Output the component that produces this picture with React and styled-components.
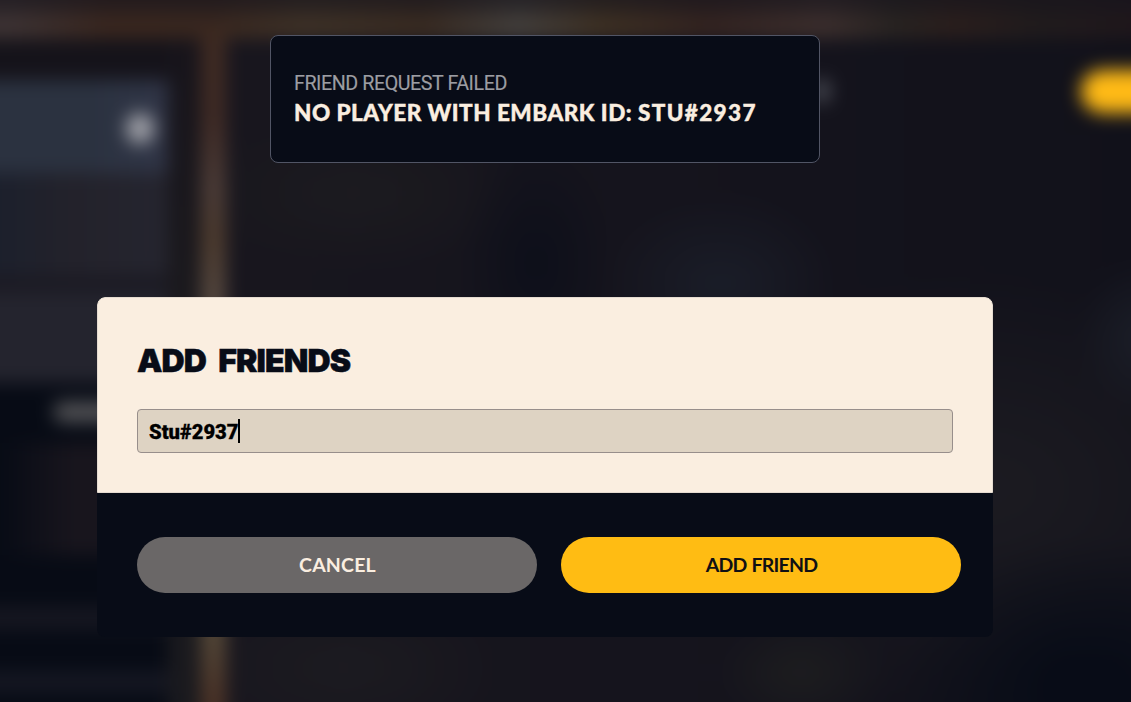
import React, { useState } from 'react';
import styled, { createGlobalStyle } from 'styled-components';

const GlobalStyle = createGlobalStyle`
  * {
    box-sizing: border-box;
  }

  body {
    margin: 0;
    overflow: hidden;
    background: #14131b;
  }
`;

const Page = styled.div`
  position: relative;
  width: 100%;
  height: 100vh;
  overflow: hidden;
`;

/* Blurred game menu, bleeds past the page so the blur has no soft edge */
const Backdrop = styled.div`
  position: absolute;
  inset: -24px;
  display: flex;
  flex-direction: column;
  filter: blur(9px);
`;

const Rail = styled.div`
  height: 62px;
  flex-shrink: 0;
  background:
    linear-gradient(180deg, rgba(22, 20, 28, 0.7) 38%, rgba(22, 20, 28, 0) 80%),
    linear-gradient(90deg, #403535 3%, #3c281f 11%, #3b281f 20%, #403327 28%, #3b2c21 38%, #46423e 46%, #403223 53%, #352420 62%, #3e302e 72%, #292421 78%, #2c1f1c 83%, #211c1c 90%, #20161b);
`;

const Scene = styled.div`
  display: flex;
  flex: 1;
`;

const Sidebar = styled.div`
  width: 192px;
  padding-top: 42px;
  background: #15131a;
`;

const ProfileRow = styled.div`
  display: flex;
  align-items: center;
  justify-content: flex-end;
  height: 93px;
  padding: 3px 14px 0 0;
  background: linear-gradient(90deg, #2b3240 60%, #303547);
`;

const Avatar = styled.div`
  width: 28px;
  height: 31px;
  border-radius: 50%;
  background: #a0a1a8;
`;

const SideRow = styled.div`
  height: ${(props) => props.$height}px;
  background: ${(props) => props.$color};
`;

const LabelRow = styled.div`
  height: 60px;
  padding: 19px 0 0 78px;
  background: #070b15;
`;

const Label = styled.div`
  width: 70px;
  height: 20px;
  border-radius: 8px;
  background: #535356;
`;

const Gap = styled.div`
  width: 33px;
  background: linear-gradient(180deg, #17141b, #1c1b1e 50%, #19191e);
`;

const Pillar = styled.div`
  width: 25px;
  background: linear-gradient(180deg, #402b22 0, #402b25 80px, #4c3c37 150px, #4d3b2e 200px, #554840 265px, #554838 595px, #4b3226 665px);
`;

const Hall = styled.div`
  display: flex;
  justify-content: space-between;
  flex: 1;
  padding-top: 32px;
  background:
    radial-gradient(ellipse 80px 130px at 310px 225px, #0d0f1a, transparent),
    radial-gradient(ellipse 120px 90px at 495px 245px, #1a1d28, transparent),
    radial-gradient(ellipse 170px 80px at 130px 155px, #1c1b1f, transparent),
    radial-gradient(ellipse 70px 80px at 920px 300px, #1b1e28, transparent),
    radial-gradient(ellipse 190px 150px at 860px 650px, #080c17 20%, transparent),
    radial-gradient(ellipse 320px 220px at 760px 450px, #1c1b21, transparent),
    radial-gradient(ellipse 90px 60px at 575px 635px, #1d1d1f, transparent),
    radial-gradient(ellipse 160px 80px at 120px 630px, #1c1b20, transparent),
    linear-gradient(90deg, #18161e, #14131c 60%, #11111a);
`;

const Glow = styled.div`
  width: 19px;
  height: 24px;
  margin: 9px 0 0 586px;
  border-radius: 50%;
  background: #484a53;
`;

const Pill = styled.div`
  width: 74px;
  height: 43px;
  border-radius: 22px 0 0 22px;
  background: #ffba16;
`;

const Overlay = styled.div`
  position: relative;
  padding-top: 35px;
`;

const Toast = styled.div`
  width: 550px;
  height: 128px;
  margin-left: 270px;
  padding: 35px 23px 0;
  border: 1px solid #515565;
  border-radius: 8px;
  background: #080c17;
  white-space: nowrap;
`;

const ToastTitle = styled.div`
  color: #9c9da2;
  font-family: Roboto, sans-serif;
  font-size: 19.7px;
  line-height: 26px;
  letter-spacing: -0.45px;
  -webkit-text-stroke: 0.15px #9c9da2;
`;

const ToastMessage = styled.div`
  margin-top: 1px;
  color: #faeee0;
  font-family: Lato, sans-serif;
  font-size: 22.5px;
  font-weight: 900;
  line-height: 30px;
  letter-spacing: 0.5px;
  -webkit-text-stroke: 0.4px #faeee0;
`;

const PlayerTag = styled.span`
  letter-spacing: 1.35px;
`;

const Dialog = styled.div`
  width: 896px;
  margin: 134px 0 0 97px;
  border-radius: 8px;
  overflow: hidden;
  background: #080c17;
`;

const DialogBody = styled.div`
  height: 196px;
  padding: 39px 39px 0;
  border: 1px solid #e5dbd0;
  border-top-left-radius: 8px;
  border-top-right-radius: 8px;
  background: #faeee0;
`;

const Title = styled.h1`
  margin: 0 0 24px;
  color: #080c17;
  font-family: Inter, sans-serif;
  font-size: 32px;
  font-weight: 900;
  line-height: 48px;
  letter-spacing: -0.85px;
  word-spacing: 6.5px;
  white-space: nowrap;
  -webkit-text-stroke: 0.5px #080c17;
`;

const Field = styled.div`
  display: flex;
  align-items: center;
  height: 44px;
  padding: 2px 11px 0;
  border: 1px solid #978e8b;
  border-radius: 4px;
  background: #ded3c3;
`;

const Value = styled.span`
  color: #000;
  font-family: Roboto, sans-serif;
  font-size: 20.2px;
  font-weight: 900;
  line-height: 24px;
  -webkit-text-stroke: 0.3px #000;
`;

const Caret = styled.span`
  width: 2px;
  height: 24px;
  margin: -2px 0 0 -1px;
  background: #000;
`;

const DialogFooter = styled.div`
  display: flex;
  gap: 24px;
  height: 144px;
  padding: 44px 32px 0 40px;
`;

const Button = styled.button`
  flex: 1;
  height: 56px;
  padding: 0 0 2px 1px;
  border: none;
  border-radius: 28px;
  background: ${(props) => (props.$primary ? '#ffbc13' : '#6a6767')};
  color: ${(props) => (props.$primary ? '#101014' : '#faeee0')};
  font-family: Lato, sans-serif;
  font-size: 19.5px;
  font-weight: 700;
  letter-spacing: ${(props) => (props.$primary ? '-0.8px' : '0.2px')};
  word-spacing: 1px;
  cursor: pointer;
`;

const sideRows = [
  { height: 102, color: 'linear-gradient(90deg, #1c202c 12%, #23222b 50%, #25252f)' },
  { height: 18, color: '#1b1a23' },
  { height: 90, color: '#24242e' },
];

const lowerRows = [
  { height: 112, color: 'linear-gradient(90deg, #070b15 12%, #18151d 50%, #19161d)' },
  { height: 52, color: '#070b15' },
  { height: 22, color: '#161721' },
  { height: 42, color: '#070b15' },
  { height: 22, color: '#151722' },
  { height: 60, color: '#070b15' },
];

function MenuBackdrop() {
  return (
    <Backdrop>
      <Rail />
      <Scene>
        <Sidebar>
          <ProfileRow>
            <Avatar />
          </ProfileRow>
          {sideRows.map((row, i) => (
            <SideRow key={i} $height={row.height} $color={row.color} />
          ))}
          <LabelRow>
            <Label />
          </LabelRow>
          {lowerRows.map((row, i) => (
            <SideRow key={i} $height={row.height} $color={row.color} />
          ))}
        </Sidebar>
        <Gap />
        <Pillar />
        <Hall>
          <Glow />
          <Pill />
        </Hall>
      </Scene>
    </Backdrop>
  );
}

export default function App() {
  const [playerId] = useState('Stu#2937');

  return (
    <Page>
      <GlobalStyle />
      <MenuBackdrop />
      <Overlay>
        <Toast>
          <ToastTitle>FRIEND REQUEST FAILED</ToastTitle>
          <ToastMessage>
            NO PLAYER WITH EMBARK ID: <PlayerTag>{playerId.toUpperCase()}</PlayerTag>
          </ToastMessage>
        </Toast>
        <Dialog>
          <DialogBody>
            <Title>ADD FRIENDS</Title>
            <Field>
              <Value>{playerId}</Value>
              <Caret />
            </Field>
          </DialogBody>
          <DialogFooter>
            <Button type="button">CANCEL</Button>
            <Button type="button" $primary>ADD FRIEND</Button>
          </DialogFooter>
        </Dialog>
      </Overlay>
    </Page>
  );
}
